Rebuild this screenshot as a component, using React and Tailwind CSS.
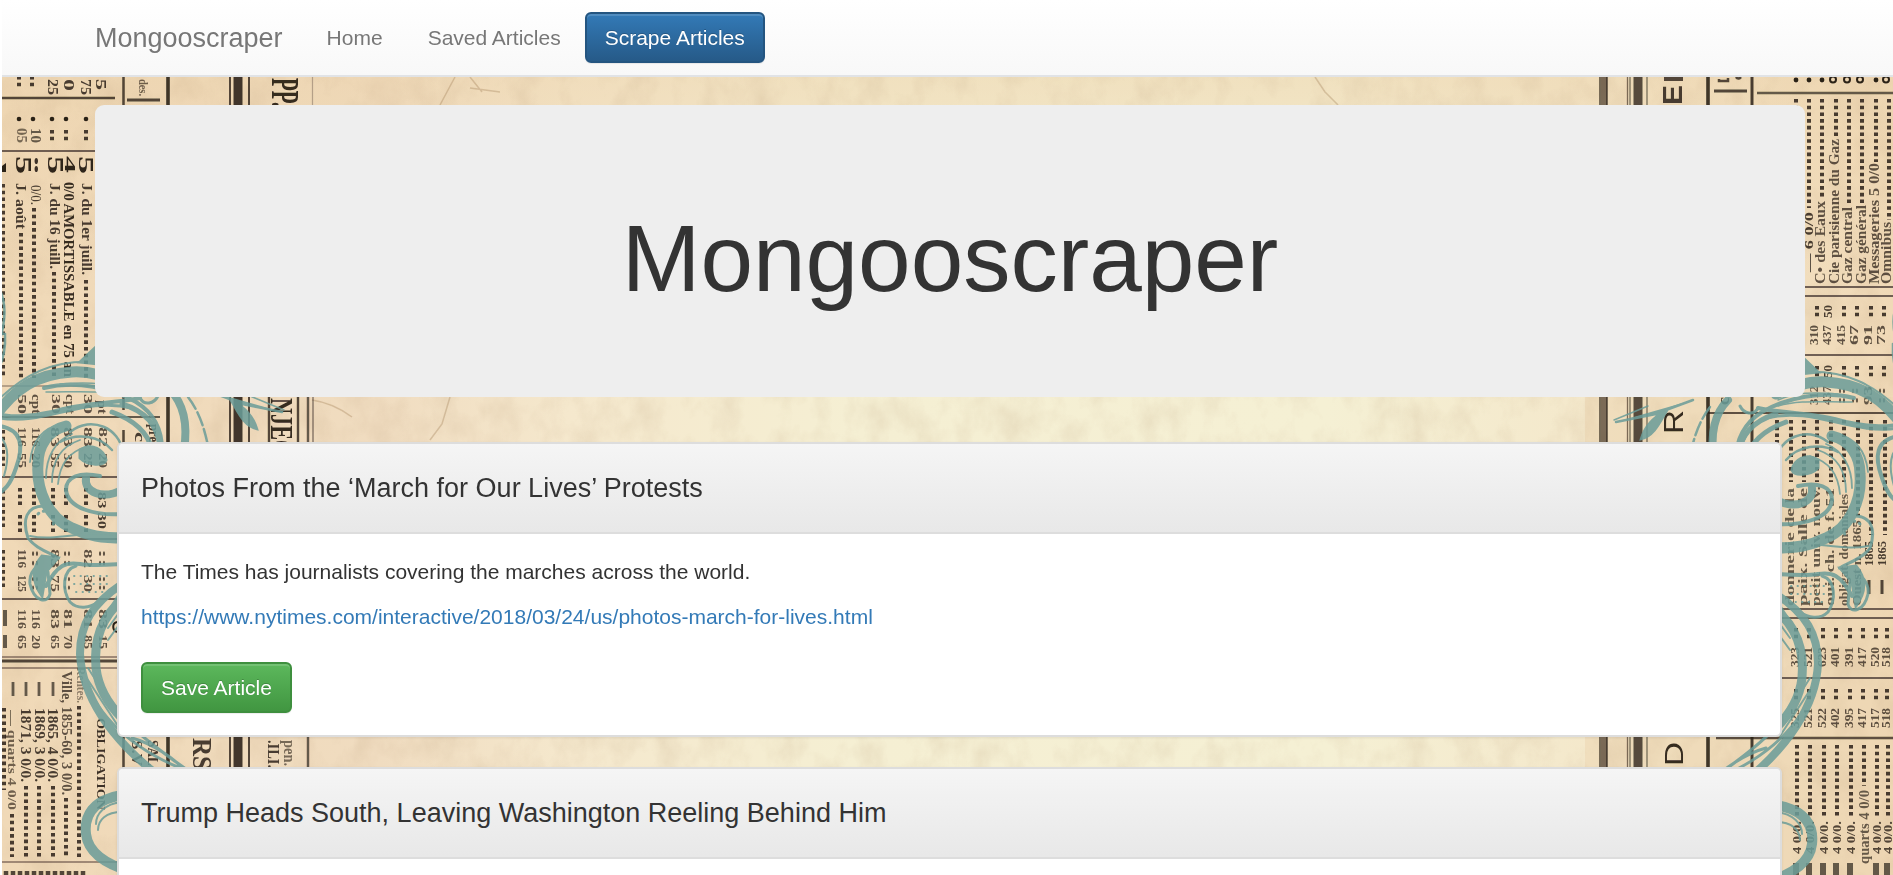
import React from "react";

const INK = "#2b2118";

// Column text printed sideways; dir 90 reads downwards, -90 upwards.
function Side({ x, y, len, size = 13, dir = 90, bold = true, o = 0.85, children }) {
  return (
    <text
      transform={`translate(${x} ${y}) rotate(${dir})`}
      y={size * 0.34}
      fontSize={size}
      fontWeight={bold ? 700 : 400}
      textLength={len}
      lengthAdjust="spacingAndGlyphs"
      fill={INK}
      opacity={o}
    >
      {children}
    </text>
  );
}

function Dots({ x, y1, y2 }) {
  return <path d={`M${x} ${y1}V${y2}`} stroke={INK} strokeWidth="4" strokeDasharray="3.6 3.1" opacity="0.85" />;
}

function Line({ d, w = 2, o = 0.8 }) {
  return <path d={d} stroke={INK} strokeWidth={w} opacity={o} fill="none" />;
}

function Scroll() {
  return (
    <g fill="none" stroke="#6a9d99" strokeLinecap="round" opacity="0.86">
      <path d="M-6 418C14 388 38 374 72 372C88 371 106 376 122 384" strokeWidth="11" />
      <path d="M0 398C24 376 50 360 94 362" strokeWidth="2" />
      <path d="M80 362L97 346L100 364Z" fill="#6a9d99" strokeWidth="3" />
      <path d="M0 418C44 426 84 396 132 408C150 414 158 434 160 450" strokeWidth="3" />
      <path d="M0 414C10 418 34 416 52 412C84 402 112 404 140 398" strokeWidth="4" />
      <path d="M44 388C76 380 112 388 136 402C152 412 162 428 162 450" strokeWidth="4" />
      <path d="M46 392C80 392 100 390 120 396M60 384C84 382 102 382 120 390" strokeWidth="1.5" />
      <path d="M112 412C134 420 148 432 152 450M122 404C148 412 158 428 160 446" strokeWidth="5" />
      <path d="M140 398C144 406 154 404 158 396" strokeWidth="3" />
      <path d="M170 390C184 404 188 424 184 450" strokeWidth="8" />
      <path d="M188 397C198 410 204 426 208 446" strokeWidth="2.5" strokeDasharray="14 4" />
      <path d="M205 390L232 400C246 408 254 418 257 429C244 426 238 412 232 402L282 412" fill="#6a9d99" strokeWidth="2.5" />
      <path d="M250 396L284 410" strokeWidth="1.5" />
      <path d="M0 426C22 430 24 446 16 468C10 486 4 490 -2 494" strokeWidth="4" />
      <path d="M-4 434C8 440 10 456 4 476" strokeWidth="2" />
      <path d="M66 426C48 430 38 446 38 464C36 490 48 518 72 528C88 536 102 538 124 538" strokeWidth="11" />
      <path d="M62 424C42 428 32 442 30 462M72 434C56 440 46 456 46 478M80 440C62 446 52 460 52 482M88 446C68 452 60 464 58 484" strokeWidth="1.8" />
      <path d="M70 432C92 414 120 430 122 450" strokeWidth="2.5" />
      <path d="M60 442C78 432 100 436 112 450" strokeWidth="2.5" />
      <path d="M80 450C92 442 104 450 106 460C104 466 88 466 80 458Z" fill="#6a9d99" strokeWidth="3" />
      <path d="M122 490C102 500 84 492 86 478" strokeWidth="8" />
      <path d="M124 514C94 516 68 508 66 490C66 476 80 472 100 476" strokeWidth="4" />
      <path d="M44 506C26 506 22 520 28 538C38 552 56 554 58 558C44 560 28 568 30 584C34 602 48 604 50 594L48 572" strokeWidth="3" />
      <path d="M42 556C32 568 32 582 42 596L46 572L58 558Z" fill="#6a9d99" strokeWidth="3" />
      <path d="M30 536C58 542 90 528 122 536" strokeWidth="2" />
      <path d="M46 586C58 564 66 562 80 564C92 566 104 565 124 564" strokeWidth="4" />
      <path d="M76 566C62 570 62 590 70 602C78 610 90 608 98 602" strokeWidth="3" />
      <path d="M38 514C46 506 58 516 52 528" strokeWidth="3" strokeDasharray="1 5" />
      <path d="M74 576H112M74 584H108M76 592H104" strokeWidth="1.8" strokeDasharray="0.5 6" />
      <path d="M122 584C92 604 80 624 80 654C82 694 108 738 164 780" strokeWidth="8" />
      <path d="M122 600C98 620 94 646 96 668C98 686 108 704 122 718" strokeWidth="9" />
      <path d="M120 592L104 618M124 606L108 628M124 618L108 640M88 668L116 712M88 680L118 726M90 696L120 738" strokeWidth="2" />
      <path d="M84 676C96 716 132 748 180 768M96 668C108 716 148 742 190 772M132 738C154 744 176 760 184 770" strokeWidth="3" />
      <path d="M122 795C92 800 84 816 86 834C88 852 104 864 132 872" strokeWidth="10" />
      <path d="M122 812C106 812 98 820 98 830M122 802C104 804 96 814 96 824" strokeWidth="2" />
      <path d="M0 290C6 304 6 318 0 340M-4 332L5 334C6 350 2 362 -2 370" strokeWidth="2.5" />
    </g>
  );
}

function LeftColumns() {
  const rows = [22, 36, 55, 68, 88, 103];
  return (
    <g>
      <Line d="M2 98H115" w={2.4} />
      <Line d="M2 151H100" w={2} o={0.65} />
      <Line d="M2 386H120" w={1.5} o={0.4} />
      <Line d="M2 417H160" w={2} o={0.7} />
      <Line d="M2 477H120M2 539H120M2 599H120" w={2} o={0.65} />
      <Line d="M2 661H120" w={3.2} />
      <Line d="M2 657H120M2 668H120M2 862H120" w={1.4} o={0.55} />
      <Line d="M123.500 77V410M123.500 430V875" w={2.5} />
      <Line d="M168 77V875" w={3.6} o={0.9} />
      <Line d="M127 100H160" w={3} />
      <Line d="M230 77V875M249 77V875" w={2} />
      <Line d="M238 77V875" w={9} o={0.88} />
      <Line d="M312.500 77V397" w={1.2} o={0.3} />
      <Line d="M308 397V875" w={2.4} o={0.7} />
      <Line d="M313 397V445" w={1.5} o={0.5} />

      <Side x={143} y={79} len={17} size={13} o={0.65}>des.</Side>
      <Side x={286} y={78} len={29} size={41} o={0.95}>PP.</Side>
      <Side x={282} y={398} len={58} size={32} o={0.95}>NJEC</Side>
      <Line d="M269 397V445M298 397V445" w={2.4} />
      <Side x={202} y={738} len={32} size={27} o={0.85}>RS</Side>
      <Side x={274} y={740} len={28} size={17}>.ILI.</Side>
      <Side x={290} y={740} len={26} size={17} o={0.6}>pen.</Side>
      <Side x={137} y={740} len={26} size={14}>S.V</Side>
      <Side x={153} y={740} len={26} size={14}>SAL</Side>
      <Side x={140} y={432} len={10} size={14}>c</Side>
      <Side x={154} y={424} len={18} size={14}>pre</Side>

      <Dots x={19} y1={76} y2={89} />
      <Dots x={32} y1={76} y2={89} />
      <Side x={53} y={79} len={16} size={15}>25</Side>
      <Side x={69} y={79} len={12} size={15}>0</Side>
      <Side x={86} y={79} len={16} size={15}>75</Side>
      <Side x={101} y={79} len={11} size={15}>5</Side>
      {[19, 33, 52, 66, 86].map((x) => (
        <g key={x}>
          <circle cx={x} cy={119} r={2.3} fill={INK} />
          {x > 40 && <Dots x={x} y1={130} y2={141} />}
        </g>
      ))}
      <Side x={22} y={128} len={15} size={15} o={0.6}>05</Side>
      <Side x={36} y={128} len={15} size={15} o={0.7}>10</Side>
      <Side x={24} y={156} len={18} size={23} o={0.98}>5</Side>
      <Side x={36} y={157} len={16} size={12} o={0.9}>••</Side>
      <Side x={56} y={156} len={18} size={23} o={0.98}>5</Side>
      <Side x={70} y={156} len={17} size={14} o={0.98}>4</Side>
      <Side x={86} y={156} len={18} size={21} o={0.98}>5</Side>
      <path d="M2 166L6 163V172H2Z" fill={INK} />

      <Side x={21} y={183} len={46} size={14}>J. août</Side>
      <Side x={36} y={185} len={20} size={14} bold={false}>0/0.</Side>
      <Side x={55} y={183} len={86} size={14}>J. du 16 juill.</Side>
      <Side x={69} y={182} len={195} size={14} o={0.95}>0/0 AMORTISSABLE en 75 an</Side>
      <Side x={87} y={183} len={92} size={14}>J. du 1er juill.</Side>
      <Dots x={3} y1={184} y2={378} />
      <Dots x={21} y1={233} y2={378} />
      <Dots x={34} y1={208} y2={378} />
      <Dots x={54} y1={272} y2={378} />
      <Dots x={86} y1={280} y2={378} />

      {[22, 36, 56, 70, 88].map((x, i) => (
        <Side key={x} x={x} y={394} len={20} size={13} o={0.75}>{["50", "cpt", "30", "cpt", "30"][i]}</Side>
      ))}
      <Side x={102} y={400} len={14} size={13} o={0.75}>pt</Side>
      {rows.map((x, i) => (
        <g key={x}>
          <Side x={x} y={427} len={20} size={13} o={0.75}>{["116", "116", "83", "83", "83", "82"][i]}</Side>
          <Side x={x} y={453} len={15} size={13} o={0.75}>{["55", "20", "55", "30", "25", "20"][i]}</Side>
          {i < 5 && <Dots x={x - 2} y1={488} y2={506} />}
          {i < 5 && <Dots x={x - 2} y1={515} y2={532} />}
          <Side x={x} y={549} len={19} size={13} o={0.75}>{["116", "::", "83", "::", "82", "::"][i]}</Side>
          <Side x={x} y={575} len={17} size={13} o={0.75}>{["125", "::", "75", "::", "30", "::"][i]}</Side>
          <Side x={x} y={609} len={20} size={13} o={0.75}>{["116", "116", "83", "81", "81", "83"][i]}</Side>
          <Side x={x} y={635} len={14} size={13} o={0.75}>{["65", "20", "65", "70", "85", "15"][i]}</Side>
        </g>
      ))}
      <Dots x={3} y1={430} y2={466} />
      <Dots x={3} y1={490} y2={530} />
      <Dots x={3} y1={550} y2={590} />
      <Line d="M5 610V626M5 635V648" w={4} o={0.7} />
      <Side x={102} y={492} len={37} size={13}>83 30</Side>
      <path d="M117 622C112 623 112 630 117 632" stroke={INK} strokeWidth="2" fill="none" />

      {[13, 26, 39, 53].map((x) => (
        <Line key={x} d={`M${x} 682V696`} w={2.8} o={0.7} />
      ))}
      <Side x={67} y={671} len={124} size={14} o={0.75}>Ville, 1855-60, 3 0/0.</Side>
      <Side x={81} y={667} len={36} size={13} o={0.5}>Rentes.</Side>
      <Side x={53} y={708} len={74} size={14}>1865, 4 0/0.</Side>
      <Side x={40} y={708} len={74} size={14}>1869, 3 0/0.</Side>
      <Side x={26} y={708} len={74} size={14}>1871, 3 0/0.</Side>
      <Side x={12} y={710} len={100} size={13} o={0.65}>— quarts 4 0/0</Side>
      <Dots x={4} y1={708} y2={790} />
      <Side x={101} y={718} len={92} size={13} o={0.9}>OBLIGATION</Side>
      <Dots x={12} y1={814} y2={857} />
      {[26, 39, 53].map((x) => <Dots key={x} x={x} y1={786} y2={857} />)}
      <Dots x={66} y1={798} y2={857} />
      <Dots x={79} y1={706} y2={857} />
      {[6, 13, 20, 27, 34, 41, 48, 55, 62, 69, 76, 83].map((x) => <Line key={x} d={`M${x} 871V875`} w={4.5} o={0.8} />)}
    </g>
  );
}

const names = [
  ["C• des Eaux", 1820, 83],
  ["Cie parisienne du Gaz", 1834, 145],
  ["Gaz central", 1847, 77],
  ["Gaz général", 1861, 79],
  ["Messageries 5 0/0", 1874, 121],
  ["Omnibus", 1886, 62],
];

const lower = [
  ["donnerie de la", 1790],
  ["paix. Salle de", 1803],
  ["petit univ. nouv.", 1816],
  ["oui. ch. de f. 51", 1830],
  ["obligat. domaniales", 1844],
  ["Ouest n. 1865", 1857],
];

function RightColumns() {
  const cols = [1814, 1827, 1841, 1854, 1868, 1881];
  return (
    <g>
      <Line d="M1604 77V875" w={6} o={0.6} />
      <Line d="M1600 77V875M1607 77V875" w={1.5} />
      <Line d="M1627.500 77V875M1630 77V875M1647 77V875" w={1.3} o={0.6} />
      <Line d="M1638 77V875" w={9} o={0.78} />
      <Line d="M1708 77V875" w={3.6} o={0.9} />
      <Line d="M1752 77V875" w={3} o={0.85} />
      <Line d="M1714 91H1747" w={3} />
      <Line d="M1757 93H1893" w={2.4} o={0.7} />
      <Line d="M1800 287H1893M1800 296H1893M1800 355H1893" w={2} o={0.65} />
      <Line d="M1708 413H1893" w={2} o={0.75} />
      <Line d="M1780 609H1893M1780 618H1893M1780 678H1893" w={2} o={0.65} />
      <Line d="M1716 738H1893" w={2.4} o={0.75} />
      <g fontFamily="'Liberation Sans', sans-serif">
        <Side x={1673} y={105} len={20} size={27} dir={-90}>E</Side>
        <Line d="M1664 79H1683" w={4} />
        <Side x={1674} y={434} len={24} size={27} dir={-90} bold={false} o={0.95}>R</Side>
        <Side x={1674} y={766} len={24} size={25} dir={-90} bold={false} o={0.95}>D</Side>
      </g>
      <Line d="M1719 79V81H1728V78M1736 77Q1738 80 1741 77" w={2.5} />
      <Side x={1724} y={405} len={8} size={16} dir={-90}>c</Side>

      <Side x={1809} y={272} len={60} size={13} dir={-90}>— 6 0/0</Side>
      {names.map(([t, x, len]) => (
        <Side key={t} x={x} y={284} len={len} size={14} dir={-90} o={0.75}>{t}</Side>
      ))}
      {[[1796, 99, 106], [1809, 99, 208], [1822, 99, 197], [1836, 99, 136], [1849, 99, 203], [1862, 99, 203], [1876, 99, 162], [1889, 99, 220]].map(([x, a, b]) => (
        <Dots key={x} x={x} y1={a} y2={b} />
      ))}
      {[1796, 1809, 1822, 1876].map((x) => <circle key={x} cx={x} cy={80} r={2.4} fill={INK} />)}
      {[1833, 1847, 1860, 1886].map((x) => <circle key={x} cx={x} cy={79.500} r={3} fill="none" stroke={INK} strokeWidth="2" />)}
      {cols.map((x, i) => (
        <g key={x}>
          {i !== 1 && <Dots x={x + 3} y1={306} y2={317} />}
          <Side x={x} y={345} len={20} size={13} dir={-90} o={0.75}>{["310", "437", "415", "67", "91", "73"][i]}</Side>
          {i !== 1 && <Dots x={x + 3} y1={366} y2={377} />}
          <Side x={x} y={405} len={19} size={13} dir={-90} o={0.7}>{["312", "437", "::", "::", "93", "::"][i]}</Side>
        </g>
      ))}
      <Side x={1828} y={318} len={13} size={13} dir={-90}>50</Side>
      <Side x={1828} y={378} len={13} size={13} dir={-90}>50</Side>

      {[1777, 1791, 1804, 1817, 1831, 1844].map((x) => <Dots key={x} x={x} y1={420} y2={482} />)}
      <Dots x={1858} y1={420} y2={516} />
      <Dots x={1871} y1={420} y2={535} />
      <Dots x={1885} y1={420} y2={535} />
      {lower.map(([t, x], i) => (
        <Side key={t} x={x} y={606} len={[118, 118, 120, 118, 112, 86][i]} size={13} dir={-90} o={0.7}>{t}</Side>
      ))}
      {[1869, 1882].map((x) => (
        <g key={x}>
          <Side x={x} y={566} len={25} size={13} dir={-90}>1865</Side>
          <Line d={`M${x} 580V594`} w={3} />
        </g>
      ))}
      {[1796, 1809, 1823, 1836, 1850, 1863, 1876, 1887].map((x, i) => (
        <g key={x}>
          <Dots x={x} y1={628} y2={639} />
          <Side x={x - 1} y={667} len={20} size={13} dir={-90} o={0.75}>{["323", "521", "623", "401", "391", "417", "520", "518"][i]}</Side>
          <Dots x={x} y1={689} y2={700} />
          <Side x={x - 1} y={728} len={20} size={13} dir={-90} o={0.75}>{["325", "521", "522", "402", "395", "417", "517", "518"][i]}</Side>
          <Dots x={x + 1} y1={745} y2={i === 5 ? 786 : 816} />
          {i !== 5 && <Side x={x + 1} y={854} len={33} size={13} dir={-90} o={0.8}>4 0/0.</Side>}
          {i !== 5 && <Line d={`M${x} 863V875`} w={6} o={0.7} />}
        </g>
      ))}
      <Side x={1864} y={864} len={74} size={14} dir={-90} o={0.7}>quarts 4 0/0</Side>
    </g>
  );
}

function Newsprint() {
  return (
    <svg aria-hidden="true" viewBox="2 0 1891 875" className="block h-[875px] w-full [grid-area:1/1]" fontFamily="'Liberation Serif', serif">
      <defs>
        <linearGradient id="paper" x1="0" x2="1" y1="0" y2="0">
          <stop offset="0" stopColor="#f0d9b7" />
          <stop offset="0.2" stopColor="#f0dcc0" />
          <stop offset="0.3" stopColor="#f5e8cd" />
          <stop offset="0.45" stopColor="#f5efd3" />
          <stop offset="0.7" stopColor="#f5f0d4" />
          <stop offset="0.84" stopColor="#f4e8cb" />
          <stop offset="1" stopColor="#f0d9b7" />
        </linearGradient>
        <linearGradient id="topTone" x1="0" x2="0" y1="0" y2="1">
          <stop offset="0" stopColor="#ecd2ab" stopOpacity="0.5" />
          <stop offset="1" stopColor="#ecd2ab" stopOpacity="0" />
        </linearGradient>
        <filter id="grain" x="0" y="0" width="100%" height="100%">
          <feTurbulence type="fractalNoise" baseFrequency="0.035 0.025" numOctaves="5" seed="8" />
          <feColorMatrix values="0 0 0 0 0.52  0 0 0 0 0.37  0 0 0 0 0.22  0.9 0 0 0 -0.36" />
        </filter>
        <filter id="soft" x="0" y="0" width="100%" height="100%">
          <feGaussianBlur stdDeviation="0.6" />
        </filter>
      </defs>
      <rect x="2" width="1891" height="875" fill="url(#paper)" />
      <rect x="2" y="77" width="1891" height="200" fill="url(#topTone)" />
      <rect x="1585" y="397" width="308" height="478" fill="#ecd3af" opacity="0.5" />
      <rect x="2" width="1891" height="875" filter="url(#grain)" opacity="0.45" />
      <g filter="url(#soft)">
        <path d="M440 105L448 90L455 77M470 77L482 92M470 88L500 92M1315 77L1325 92L1338 105M312 400C326 402 340 408 352 417M430 440L442 424L450 397" fill="none" stroke="#967247" strokeWidth="1.5" opacity="0.3" />
        <LeftColumns />
        <RightColumns />
        <Scroll />
        <g transform="translate(1898 10) scale(-1 1)">
          <Scroll />
        </g>
      </g>
    </svg>
  );
}

function NavBar() {
  return (
    <nav className="flex h-[77px] items-center border-b-2 border-[#e1e3e6] bg-linear-to-b from-white to-[#f8f8f8] pl-[93px] text-[#777] [text-shadow:0_1px_0_rgba(255,255,255,.25)]">
      <a className="text-[27px] leading-[30px]">Mongooscraper</a>
      <a className="ml-[44px] leading-[30px]">Home</a>
      <a className="ml-[45px] leading-[30px]">Saved Articles</a>
      <button className="ml-[24px] h-[51px] w-[180px] rounded-md border-2 border-[#245580] bg-linear-to-b from-[#337ab7] to-[#265a88] text-white shadow-[inset_0_2px_0_rgba(255,255,255,.15),0_1px_1px_rgba(0,0,0,.075)] [text-shadow:0_-1px_0_rgba(0,0,0,.2)]">
        Scrape Articles
      </button>
    </nav>
  );
}

function Article({ title, summary, link }) {
  return (
    <article className="overflow-hidden rounded-md border-2 border-[#ddd] bg-white shadow-[0_1px_3px_rgba(0,0,0,.08)]">
      <header className="flex h-[90px] items-center border-b-2 border-[#ddd] bg-linear-to-b from-[#f5f5f5] to-[#e8e8e8] px-[22px]">
        <h3 className="text-[27px] leading-[30px]">{title}</h3>
      </header>
      <div className="px-[22px] pt-[23px] pb-[22px]">
        <p>{summary}</p>
        <p className="mt-[15px] text-[#337ab7]">{link}</p>
        <button className="mt-[30px] block h-[51px] w-[151px] rounded-md border-2 border-[#3e8f3e] bg-linear-to-b from-[#5cb85c] to-[#419641] text-white shadow-[inset_0_2px_0_rgba(255,255,255,.15),0_1px_1px_rgba(0,0,0,.075)] [text-shadow:0_-1px_0_rgba(0,0,0,.2)]">
          Save Article
        </button>
      </div>
    </article>
  );
}

export default function App() {
  return (
    <div className="grid h-[875px] overflow-hidden bg-white pl-[2px] font-['Liberation_Sans',Arial,sans-serif] text-[21px] leading-[30px] text-[#333]">
      <Newsprint />
      <div className="z-10 h-[875px] overflow-hidden [grid-area:1/1]">
        <NavBar />
        <main className="mr-[88px] ml-[93px] pt-7">
          <section className="flex h-[292px] items-center justify-center rounded-[9px] bg-[#eee] pt-[13px]">
            <h1 className="text-[94.5px] leading-[104px]">Mongooscraper</h1>
          </section>
          <section className="mt-[45px] mr-[23px] ml-[22px] flex flex-col gap-[30px]">
            <Article
              title="Photos From the ‘March for Our Lives’ Protests"
              summary="The Times has journalists covering the marches across the world."
              link="https://www.nytimes.com/interactive/2018/03/24/us/photos-march-for-lives.html"
            />
            <Article title="Trump Heads South, Leaving Washington Reeling Behind Him" />
          </section>
        </main>
      </div>
    </div>
  );
}
